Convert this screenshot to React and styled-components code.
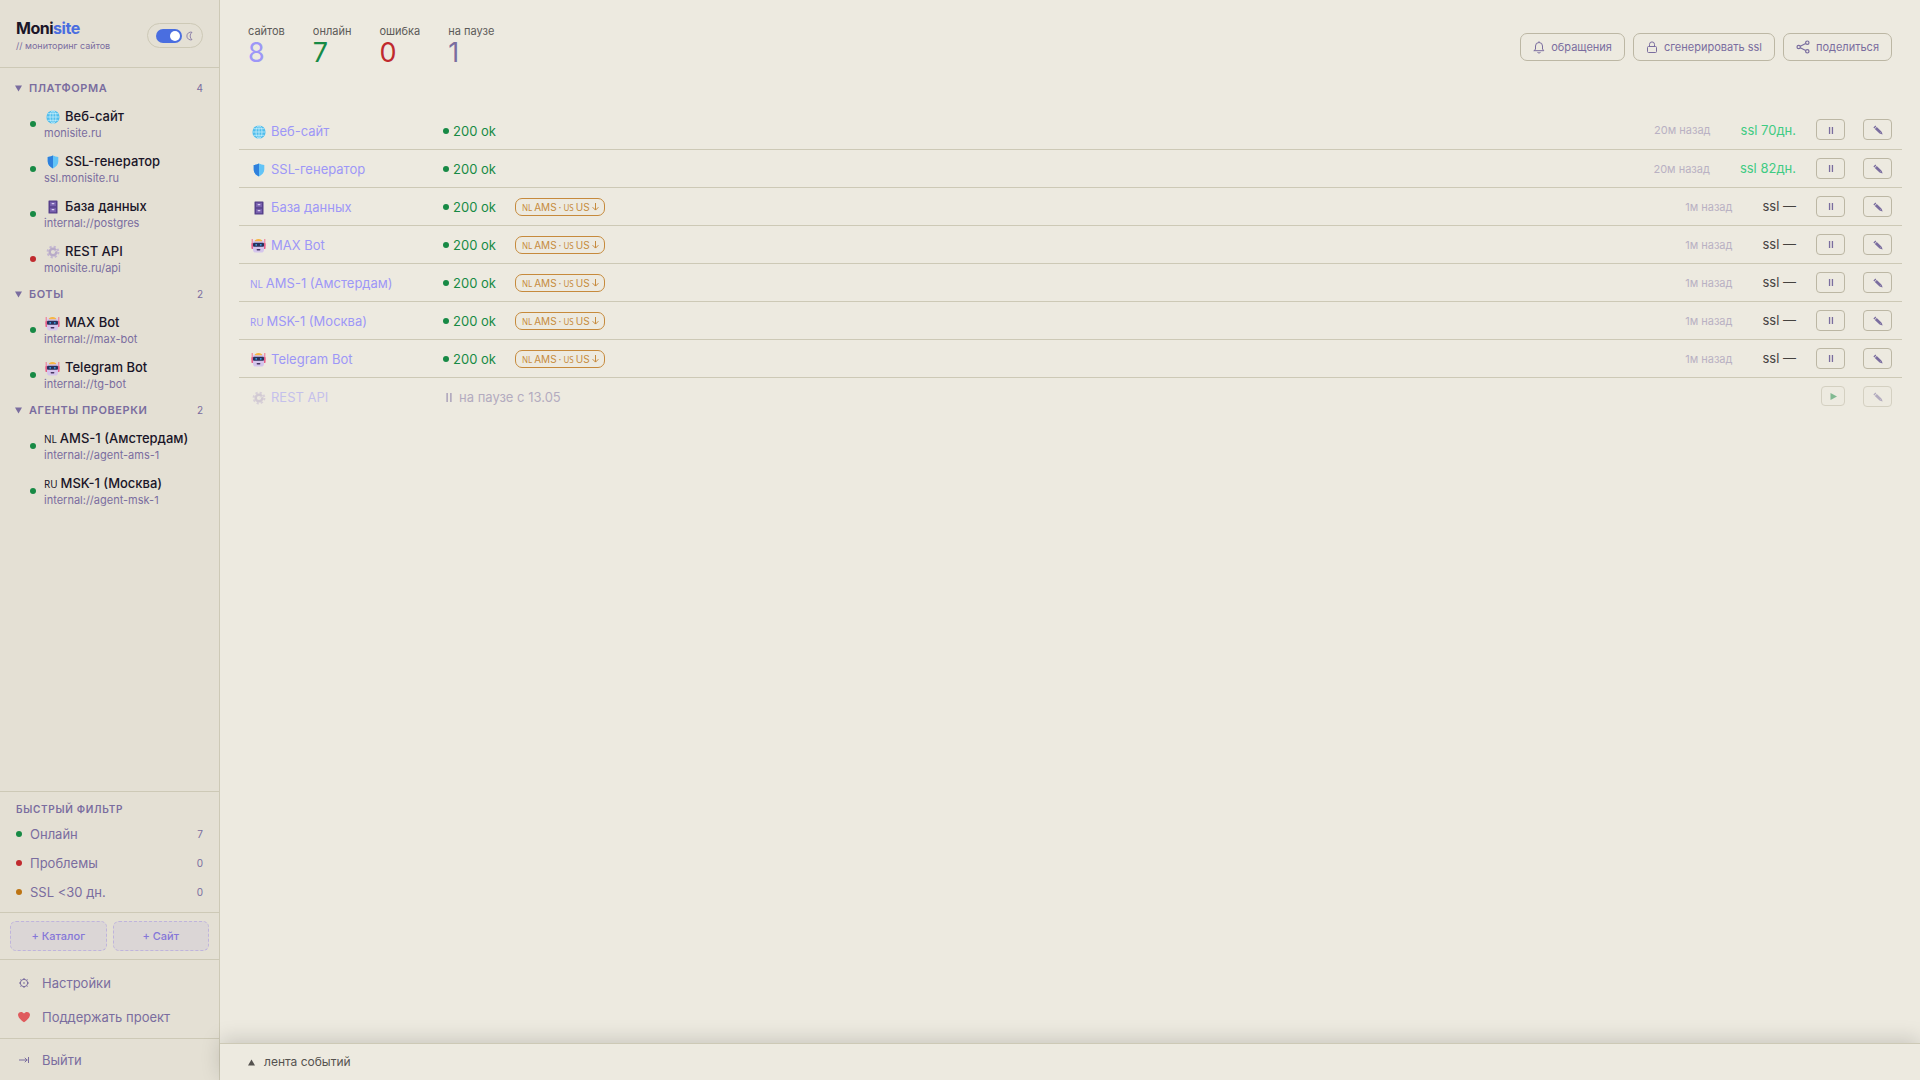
import React from "react";
import styled, { createGlobalStyle, css } from "styled-components";

const GlobalStyle = createGlobalStyle`
  * { box-sizing: border-box; }
  body {
    margin: 0;
    background: #edeae0;
    color: #7a6d9f;
    font-family: Inter, "Liberation Sans", sans-serif;
    font-size: 13px;
    line-height: 16px;
  }
  h1, h2, p { margin: 0; padding: 0; font-weight: inherit; }
  button { font: inherit; color: inherit; background: none; border: 0; padding: 0; cursor: pointer; }
  a { color: inherit; text-decoration: none; }
`;

const GREEN = "#178a45";
const RED = "#c02a2e";
const LINE = "#cdc9b6";

const Layout = styled.div`
  display: grid;
  grid-template-columns: 220px 1fr;
  min-height: 100vh;
`;

const Sidebar = styled.aside`
  display: flex;
  flex-direction: column;
  background: #e4e0d4;
  border-right: 1px solid ${LINE};
`;

const Brand = styled.header`
  display: flex;
  align-items: center;
  justify-content: space-between;
  height: 68px;
  padding: 4px 16px 0;
  border-bottom: 1px solid ${LINE};
`;

const Logo = styled.h1`
  padding-top: 3px;
  color: #1a1528;
  font-size: 16px;
  line-height: 18px;
  font-weight: 700;
  letter-spacing: -0.03em;

  span { color: #4a6ee0; }
`;

const Tagline = styled.p`
  font-size: 9px;
  line-height: 18px;
`;

const ThemeSwitch = styled.label`
  display: flex;
  align-items: center;
  gap: 4px;
  height: 25px;
  padding: 0 8px;
  border: 1px solid ${LINE};
  border-radius: 13px;
  cursor: pointer;
`;

const SwitchInput = styled.input`
  appearance: none;
  display: flex;
  justify-content: flex-end;
  align-items: center;
  width: 26px;
  height: 14px;
  margin: 0;
  padding: 2px;
  border-radius: 7px;
  background: #4a6ee0;

  &::before {
    content: "";
    width: 10px;
    height: 10px;
    border-radius: 50%;
    background: #fff;
  }
`;

const Groups = styled.nav`
  flex: 1;
  padding-top: 7px;
`;

const GroupToggle = styled.button`
  display: flex;
  align-items: center;
  gap: 7px;
  width: 100%;
  height: 26px;
  padding: 0 16px 0 15px;
  font-size: 11px;
  text-align: left;
`;

const GroupTitle = styled.span`
  flex: 1;
  font-weight: 600;
  letter-spacing: 0.05em;
`;

const Count = styled.span`
  font-size: 10px;
`;

const Dot = styled.span`
  flex: none;
  width: 6px;
  height: 6px;
  border-radius: 50%;
  background: ${({ $color }) => $color};
`;

const SiteLink = styled.a`
  display: flex;
  align-items: center;
  gap: 8px;
  height: 45px;
  padding-left: 30px;
`;

const SiteText = styled.span`
  padding-top: 2px;
`;

const SiteName = styled.span`
  display: block;
  color: #1a1528;
  font-weight: 500;
  line-height: 17px;
  white-space: nowrap;
`;

const SiteUrl = styled.span`
  display: block;
  font-size: 11px;
`;

const IconBox = styled.span`
  display: inline-flex;
  justify-content: center;
  width: 17px;
  margin-right: 4px;
  vertical-align: middle;
`;

const Flag = styled.span`
  margin-right: 3px;
  font-family: "Noto Sans", sans-serif;
  font-size: 10px;
  line-height: 1;
  font-weight: 400;
`;

const SmallFlag = styled(Flag)`
  margin-right: 0;
  font-size: 8px;
`;

const Section = styled.section`
  border-top: 1px solid ${LINE};
  padding: ${({ $pad }) => $pad || "0"};
`;

const FilterTitle = styled.h2`
  padding: 0 16px 2px;
  font-size: 10px;
  line-height: 16px;
  font-weight: 600;
  letter-spacing: 0.07em;
`;

const FilterButton = styled.button`
  display: flex;
  align-items: center;
  gap: 8px;
  width: 100%;
  height: 29px;
  padding: 0 16px;
  text-align: left;

  ${Count} { margin-left: auto; }
`;

const AddRow = styled.div`
  display: grid;
  grid-template-columns: 1fr 1fr;
  gap: 6px;
`;

const AddButton = styled.button`
  height: 30px;
  border: 1px dashed #bfb4dc;
  border-radius: 6px;
  background: #dbd6d6;
  color: #8577d8;
  font-size: 11px;
  font-weight: 500;
`;

const MenuLink = styled.a`
  display: flex;
  align-items: center;
  gap: 10px;
  height: 34px;
  padding-left: 16px;

  svg { width: 16px; }
`;

const Main = styled.main`
  display: flex;
  flex-direction: column;
  min-width: 0;
`;

const Top = styled.header`
  display: flex;
  justify-content: space-between;
  align-items: center;
  height: 94px;
  padding: 0 28px;
`;

const Stats = styled.div`
  display: flex;
  gap: 28px;
  padding-bottom: 2px;
`;

const Stat = styled.div`
  color: #5c5a58;
  font-size: 11px;
  line-height: 14px;

  strong {
    display: block;
    color: ${({ $color }) => $color};
    font-size: 27px;
    line-height: 30px;
    font-weight: 400;
  }
`;

const Actions = styled.div`
  display: flex;
  gap: 8px;
`;

const ActionButton = styled.button`
  display: flex;
  align-items: center;
  gap: 6px;
  height: 28px;
  padding: 0 12px;
  border: 1px solid #bcb7a4;
  border-radius: 7px;
  font-size: 11px;
`;

const SiteTable = styled.table`
  width: calc(100% - 37px);
  margin: 17px 18px 0 19px;
  border-collapse: collapse;
  table-layout: fixed;

  td {
    height: 38px;
    padding: 0;
    white-space: nowrap;
    text-align: left;
  }
  td:nth-child(-n + 2) { padding-top: 2px; }
  tr { border-bottom: 1px solid ${LINE}; }
  tr:last-child { border-bottom: 0; }
`;

const Row = styled.tr`
  ${({ $paused }) => $paused && css`
    td > * { opacity: 0.5; }
  `}
`;

const NameLink = styled.a`
  display: block;
  padding-left: 11px;
  color: #9d97f7;
`;

const Status = styled.div`
  display: flex;
  align-items: center;
  gap: 4px;
  color: ${({ $color }) => $color};
`;

const Region = styled.span`
  display: inline-flex;
  align-items: baseline;
  gap: 2px;
  height: 18px;
  margin-left: 15px;
  padding: 0 5px 0 6px;
  border: 1px solid #c68a3c;
  border-radius: 7px;
  color: #c68a3c;
  font-size: 10px;
  line-height: 16px;
`;

const Meta = styled.div`
  display: flex;
  align-items: center;
  justify-content: flex-end;
  gap: 30px;
  margin-right: 20px;
`;

const Checked = styled.span`
  padding-top: 1px;
  color: #b9b1c3;
  font-size: 11px;
`;

const Ssl = styled.span`
  color: ${({ $ok }) => ($ok ? "#3fcb83" : "#45423f")};
`;

const Tools = styled.div`
  display: flex;
  justify-content: flex-end;
  align-items: center;
  gap: 18px;
  padding-right: 10px;
`;

const ToolButton = styled.button`
  display: flex;
  align-items: center;
  justify-content: center;
  width: ${({ $narrow }) => ($narrow ? "24px" : "29px")};
  height: ${({ $narrow }) => ($narrow ? "20px" : "21px")};
  padding-top: 1px;
  border: 1px solid #bcb7a4;
  border-radius: 4px;
`;

const Feed = styled.footer`
  height: 37px;
  margin-top: auto;
  border-top: 1px solid ${LINE};
  background: #edeae0;
  box-shadow: 0 -4px 20px rgba(0, 0, 0, 0.15);
`;

const FeedButton = styled.button`
  display: flex;
  align-items: center;
  gap: 9px;
  width: 100%;
  height: 36px;
  padding: 0 28px;
  color: #55524f;
  font-size: 12px;
`;

const Globe = () => (
  <svg width="14" height="14" viewBox="0 0 14 14">
    <circle cx="7" cy="7" r="6.6" fill="#4fbdec" />
    <g fill="none" stroke="#c4edfb" strokeWidth=".8">
      <ellipse cx="7" cy="7" rx="3" ry="6.4" />
      <path d="M7 .5v13M.5 7h13M1.6 3.7h10.8M1.6 10.3h10.8" />
    </g>
  </svg>
);

const Shield = () => (
  <svg width="14" height="14" viewBox="0 0 14 14">
    <path d="M7 .6Q9.5 2 12.3 2v4.3c0 3.3-2 5.600-5.300 7.200C3.700 11.900 1.700 9.600 1.700 6.300V2Q4.500 2 7 .6z" fill="#62c4f7" />
    <path d="M7 .6v12.900C3.700 11.900 1.700 9.600 1.700 6.300V2Q4.500 2 7 .6z" fill="#2f80dc" />
  </svg>
);

const Cabinet = () => (
  <svg width="14" height="14" viewBox="0 0 14 14">
    <rect x="2.5" y=".5" width="9" height="13" rx=".6" fill="#56408a" />
    <path d="M4 1.700h6v4.500H4zM4 7.700h6v4.500H4z" fill="#775fae" />
    <path d="M5.700 3h2.600v1.200H5.700zM5.700 9h2.600v1.200H5.700z" fill="#d9cdef" />
  </svg>
);

const Cog = () => (
  <svg width="14" height="14" viewBox="0 0 14 14" fill="none">
    <circle cx="7" cy="7" r="5.4" stroke="#c3b6d2" strokeWidth="2" strokeDasharray="2.2 2.04" />
    <circle cx="7" cy="7" r="3.3" stroke="#b8abc8" strokeWidth="2.4" />
    <path d="M7 7 11 5.500" stroke="#ded8dc" />
  </svg>
);

const Robot = () => (
  <svg width="15" height="15" viewBox="0 0 15 15">
    <path d="M1.200 1v7M13.800 1v7" stroke="#ee6f92" />
    <rect x=".4" y="5" width="2.4" height="6" rx=".8" fill="#e5608a" />
    <rect x="12.2" y="5" width="2.4" height="6" rx=".8" fill="#e5608a" />
    <rect x="2" y="2" width="11" height="12.500" rx="2.8" fill="#d5c5ec" />
    <path d="M4 2.200Q7.500-.4 11 2.200v1H4z" fill="#f6b544" />
    <rect x="2" y="4.800" width="11" height="4" rx="1" fill="#29305a" />
    <circle cx="5.2" cy="6.8" r=".9" fill="#3ea8ef" />
    <circle cx="9.8" cy="6.8" r=".9" fill="#3ea8ef" />
    <rect x="5.6" y="11" width="3.8" height="1.4" rx=".7" fill="#463461" />
  </svg>
);

const icons = { globe: Globe, shield: Shield, cabinet: Cabinet, cog: Cog, robot: Robot };

const Pause = ({ width = 8, height = 7 }) => (
  <svg width={width} height={height} viewBox="0 0 8 8" fill="currentColor">
    <path d="M1.600 0h1.500v8H1.600zM4.900 0h1.500v8H4.900z" />
  </svg>
);

const Pencil = () => (
  <svg width="10" height="10" viewBox="0 0 10 10">
    <path d="M1.400 1.600 2.300 2.500M2.800 2.900l4.700 4.500" stroke="currentColor" strokeWidth="2.8" />
    <path d="M8.600 6.400 9.600 9.400 6.500 8.500z" fill="currentColor" />
  </svg>
);

const Triangle = ({ d, color = "currentColor" }) => (
  <svg width="7" height="7" viewBox="0 0 7 7" fill={color}><path d={d} /></svg>
);

const Moon = () => (
  <svg width="8" height="10" viewBox="0 0 8 10" fill="none" stroke="currentColor" strokeWidth=".8">
    <path d="M6 1.300A3.900 3.900 0 1 0 6 8.700 4.600 4.600 0 0 1 6 1.300z" />
  </svg>
);

const Bell = () => (
  <svg width="12" height="13" viewBox="0 0 12 13" fill="none" stroke="currentColor" strokeLinecap="round" strokeLinejoin="round">
    <path d="M2.500 8V5a3.500 3.500 0 0 1 7 0v3l1.300 1.700H1.200zM4.800 11.700q1.200.9 2.400 0M6 1V.7" />
  </svg>
);

const Lock = () => (
  <svg width="12" height="13" viewBox="0 0 12 13" fill="none" stroke="currentColor">
    <rect x="1.5" y="5.5" width="9" height="6" rx="1" />
    <path d="M3.500 5.500V3.400a2.500 2.500 0 0 1 5 0v2.100" />
  </svg>
);

const Share = () => (
  <svg width="14" height="14" viewBox="0 0 14 14" fill="none" stroke="currentColor" strokeWidth="1.2">
    <circle cx="2.7" cy="7" r="1.7" />
    <circle cx="11.3" cy="2.7" r="1.7" />
    <circle cx="11.3" cy="11.3" r="1.7" />
    <path d="m4.300 6.200 5.400-2.700M4.300 7.800l5.400 2.700" />
  </svg>
);

const Gear = () => (
  <svg height="12" viewBox="0 0 12 12" fill="none" stroke="currentColor">
    <circle cx="6" cy="6" r="3.7" />
    <circle cx="6" cy="6" r=".4" />
    <path d="M6 1v1.300M6 9.700V11M1 6h1.300M9.700 6H11M2.500 2.500l.9.9M8.600 8.600l.9.9M2.500 9.500l.9-.9M8.600 3.400l.9-.9" />
  </svg>
);

const Heart = () => (
  <svg height="12" viewBox="0 0 12 12" fill="#df5a5c">
    <path d="M6 11.300C3 9.200 0 6.500 0 3.800 0 .7 4.300-.3 6 2.600 7.700-.3 12 .7 12 3.800c0 2.700-3 5.400-6 7.500z" />
  </svg>
);

const Exit = () => (
  <svg height="10" viewBox="0 0 12 10" fill="none" stroke="currentColor">
    <path d="M1 5h8.500M6.800 2.800 9 5 6.800 7.200M10.500 2v6" />
  </svg>
);

const DownArrow = () => (
  <svg width="7" height="8" viewBox="0 0 7 8" fill="none" stroke="currentColor">
    <path d="M3.500 0v7M.6 4.200l2.900 2.900 2.900-2.900" />
  </svg>
);

const groups = [
  {
    title: "ПЛАТФОРМА",
    sites: [
      { name: "Веб-сайт", url: "monisite.ru", icon: "globe" },
      { name: "SSL-генератор", url: "ssl.monisite.ru", icon: "shield" },
      { name: "База данных", url: "internal://postgres", icon: "cabinet" },
      { name: "REST API", url: "monisite.ru/api", icon: "cog", down: true },
    ],
  },
  {
    title: "БОТЫ",
    sites: [
      { name: "MAX Bot", url: "internal://max-bot", icon: "robot" },
      { name: "Telegram Bot", url: "internal://tg-bot", icon: "robot" },
    ],
  },
  {
    title: "АГЕНТЫ ПРОВЕРКИ",
    sites: [
      { name: "AMS-1 (Амстердам)", url: "internal://agent-ams-1", flag: "NL" },
      { name: "MSK-1 (Москва)", url: "internal://agent-msk-1", flag: "RU" },
    ],
  },
];

const rows = [
  { name: "Веб-сайт", icon: "globe", checked: "20м назад", ssl: "70дн." },
  { name: "SSL-генератор", icon: "shield", checked: "20м назад", ssl: "82дн." },
  { name: "База данных", icon: "cabinet", checked: "1м назад" },
  { name: "MAX Bot", icon: "robot", checked: "1м назад" },
  { name: "AMS-1 (Амстердам)", flag: "NL", checked: "1м назад" },
  { name: "MSK-1 (Москва)", flag: "RU", checked: "1м назад" },
  { name: "Telegram Bot", icon: "robot", checked: "1м назад" },
  { name: "REST API", icon: "cog", paused: true },
];

const filters = [
  { label: "Онлайн", count: 7, color: GREEN },
  { label: "Проблемы", count: 0, color: RED },
  { label: "SSL <30 дн.", count: 0, color: "#bd7413" },
];

const stats = [
  { label: "сайтов", value: 8, color: "#9d97f7" },
  { label: "онлайн", value: 7, color: GREEN },
  { label: "ошибка", value: 0, color: RED },
  { label: "на паузе", value: 1, color: "#7a6d9f" },
];

const Mark = ({ icon, flag }) => {
  if (flag) return <Flag>{flag}</Flag>;
  const Icon = icons[icon];
  return <IconBox><Icon /></IconBox>;
};

const SiteRow = ({ name, icon, flag, checked, ssl, paused }) => (
  <Row $paused={paused}>
    <td>
      <NameLink href="#"><Mark icon={icon} flag={flag} />{name}</NameLink>
    </td>
    <td>
      {paused ? (
        <Status $color="#7a6d9f"><Pause width={12} height={9} />на паузе с 13.05</Status>
      ) : (
        <Status $color={GREEN}>
          <Dot $color={GREEN} />200 ok
          {!ssl && (
            <Region>
              <SmallFlag>NL</SmallFlag>
              <span>AMS</span>
              <span>·</span>
              <SmallFlag>US</SmallFlag>
              <span>US</span>
              <DownArrow />
            </Region>
          )}
        </Status>
      )}
    </td>
    <td>
      {!paused && (
        <Meta>
          <Checked>{checked}</Checked>
          <Ssl $ok={!!ssl}>ssl {ssl || "—"}</Ssl>
        </Meta>
      )}
    </td>
    <td>
      <Tools>
        {paused ? (
          <ToolButton $narrow aria-label="Запустить"><Triangle d="M.5 0 7 3.500.5 7z" color={GREEN} /></ToolButton>
        ) : (
          <ToolButton aria-label="Пауза"><Pause /></ToolButton>
        )}
        <ToolButton aria-label="Изменить"><Pencil /></ToolButton>
      </Tools>
    </td>
  </Row>
);

const App = () => (
  <>
    <GlobalStyle />
    <Layout>
      <Sidebar>
        <Brand>
          <div>
            <Logo>Moni<span>site</span></Logo>
            <Tagline>// мониторинг сайтов</Tagline>
          </div>
          <ThemeSwitch>
            <SwitchInput type="checkbox" role="switch" defaultChecked aria-label="Тема" />
            <Moon />
          </ThemeSwitch>
        </Brand>
        <Groups>
          {groups.map(({ title, sites }) => (
            <div key={title}>
              <GroupToggle>
                <Triangle d="M0 .5h7L3.500 6.500z" />
                <GroupTitle>{title}</GroupTitle>
                <Count>{sites.length}</Count>
              </GroupToggle>
              {sites.map((site) => (
                <SiteLink href="#" key={site.name}>
                  <Dot $color={site.down ? RED : GREEN} />
                  <SiteText>
                    <SiteName><Mark {...site} />{site.name}</SiteName>
                    <SiteUrl>{site.url}</SiteUrl>
                  </SiteText>
                </SiteLink>
              ))}
            </div>
          ))}
        </Groups>
        <Section $pad="9px 0 6px">
          <FilterTitle>БЫСТРЫЙ ФИЛЬТР</FilterTitle>
          {filters.map(({ label, count, color }) => (
            <FilterButton key={label}>
              <Dot $color={color} />{label}<Count>{count}</Count>
            </FilterButton>
          ))}
        </Section>
        <Section $pad="8px 10px">
          <AddRow>
            <AddButton>+ Каталог</AddButton>
            <AddButton>+ Сайт</AddButton>
          </AddRow>
        </Section>
        <Section $pad="6px 0 4px">
          <MenuLink href="#"><Gear />Настройки</MenuLink>
          <MenuLink href="#"><Heart />Поддержать проект</MenuLink>
        </Section>
        <Section $pad="4px 0 3px">
          <MenuLink href="#"><Exit />Выйти</MenuLink>
        </Section>
      </Sidebar>
      <Main>
        <Top>
          <Stats>
            {stats.map(({ label, value, color }) => (
              <Stat key={label} $color={color}>{label}<strong>{value}</strong></Stat>
            ))}
          </Stats>
          <Actions>
            <ActionButton><Bell />обращения</ActionButton>
            <ActionButton><Lock />сгенерировать ssl</ActionButton>
            <ActionButton><Share />поделиться</ActionButton>
          </Actions>
        </Top>
        <SiteTable>
          <colgroup>
            <col width="204" />
            <col />
            <col width="220" />
            <col width="86" />
          </colgroup>
          <tbody>
            {rows.map((row) => <SiteRow key={row.name} {...row} />)}
          </tbody>
        </SiteTable>
        <Feed>
          <FeedButton><Triangle d="M3.500.5 7 6.500H0z" />лента событий</FeedButton>
        </Feed>
      </Main>
    </Layout>
  </>
);

export default App;
